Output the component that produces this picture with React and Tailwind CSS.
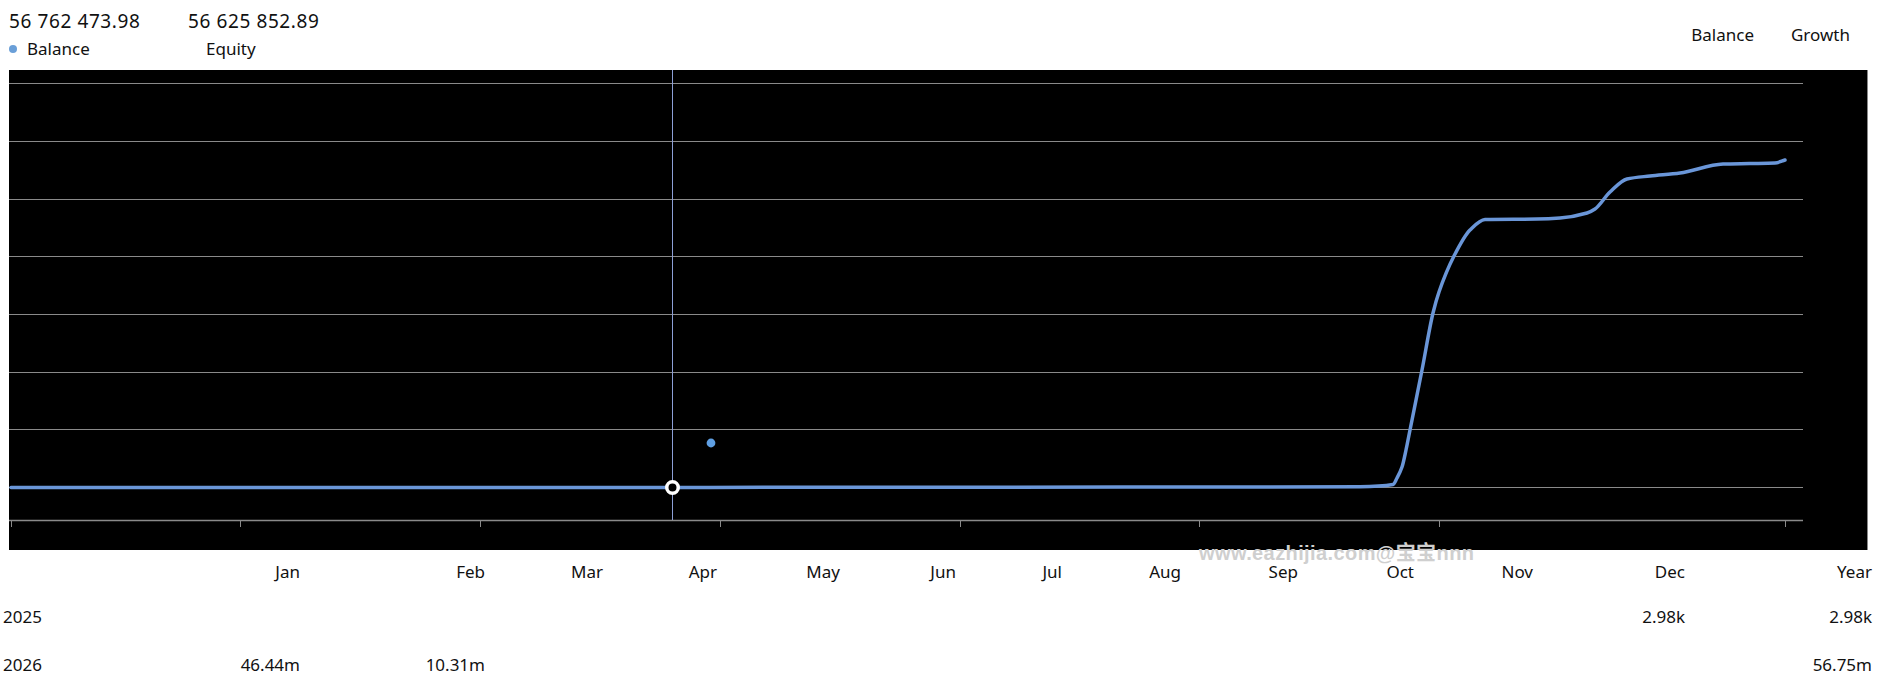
const gridLines = [13, 71, 129, 186, 244, 302, 359, 417];
const ticks = [2, 231, 471, 711, 951, 1190, 1430, 1776];

// points of the balance curve, in panel coordinates
const curve = [
  [2, 417.4], [700, 417.4], [1200, 417], [1351, 416.7], [1384, 414.5], [1388, 408], [1393, 397], [1397, 380],
  [1401, 360], [1413, 300], [1424, 243], [1430, 222],
  [1445, 186], [1461, 160], [1476, 149.5], [1528, 149],
  [1551, 148], [1578, 143], [1586, 139], [1601, 122], [1618, 109], [1641, 106],
  [1671, 103], [1714, 94], [1741, 93.5], [1766, 93], [1776, 90],
];

// monotone cubic, same idea as the chart libraries use: no overshoot on flat runs
function monotonePath(pts) {
  const n = pts.length;
  const dx = [];
  const slope = [];
  for (let i = 0; i < n - 1; i++) {
    dx[i] = pts[i + 1][0] - pts[i][0];
    slope[i] = (pts[i + 1][1] - pts[i][1]) / dx[i];
  }
  const t = [slope[0]];
  for (let i = 1; i < n - 1; i++) {
    if (slope[i - 1] * slope[i] <= 0) t[i] = 0;
    else {
      const w1 = 2 * dx[i] + dx[i - 1];
      const w2 = dx[i] + 2 * dx[i - 1];
      t[i] = (w1 + w2) / (w1 / slope[i - 1] + w2 / slope[i]);
    }
  }
  t[n - 1] = slope[n - 2];
  let d = `M${pts[0][0]} ${pts[0][1]}`;
  for (let i = 0; i < n - 1; i++) {
    const h = dx[i] / 3;
    d += ` C${pts[i][0] + h} ${pts[i][1] + t[i] * h} ${pts[i + 1][0] - h} ${pts[i + 1][1] - t[i + 1] * h} ${pts[i + 1][0]} ${pts[i + 1][1]}`;
  }
  return d;
}

const months = ["Jan", "Feb", "Mar", "Apr", "May", "Jun", "Jul", "Aug", "Sep", "Oct", "Nov", "Dec", "Year"];

const rows = [
  { year: "2025", gap: "mt-[21px]", values: { Dec: "2.98k", Year: "2.98k" } },
  { year: "2026", gap: "mt-[24px]", values: { Jan: "46.44m", Feb: "10.31m", Year: "56.75m" } },
];

const tableCols = "grid-cols-[97px_200px_185px_118px_114px_123px_116px_106px_119px_117px_116px_119px_152px_187px]";

function Stat({ value, label, dot }) {
  return (
    <div className="w-[179px]">
      <div className="text-[19px] leading-[26px] tracking-[0.6px]">{value}</div>
      <div className="mt-[4px] flex items-center text-[17px] leading-[22px]">
        <span className={`mr-[10px] h-[8px] w-[8px] rounded-full ${dot ? "bg-[#6a9fd8]" : ""}`} />
        {label}
      </div>
    </div>
  );
}

export default function App() {
  return (
    <div className="relative h-[681px] overflow-hidden bg-white font-['Noto_Sans',sans-serif] text-[#111]">
      <div className="flex h-[70px] items-start justify-between pl-[9px] pr-[34px] pt-[8px]">
        <div className="flex">
          <Stat value="56 762 473.98" label="Balance" dot />
          <Stat value="56 625 852.89" label="Equity" />
        </div>
        <div className="flex gap-[37px] pt-[15px] text-[17px] leading-[24px]">
          <span>Balance</span>
          <span>Growth</span>
        </div>
      </div>

      <div className="ml-[9px] h-[480px] w-[1859px] border-r border-[#888] bg-black">
        <svg width="1858" height="480" viewBox="0 0 1858 480" className="block">
          {gridLines.map((y) => (
            <line key={y} x1="0" x2="1794" y1={y + 0.5} y2={y + 0.5} stroke="#8a8a8a" strokeWidth="1" />
          ))}
          <line x1="0" x2="1794" y1="450.5" y2="450.5" stroke="#8a8a8a" strokeWidth="1.5" />
          {ticks.map((x) => (
            <line key={x} x1={x + 0.5} x2={x + 0.5} y1="450" y2="457" stroke="#8a8a8a" strokeWidth="1" />
          ))}
          <line x1="663.5" x2="663.5" y1="0" y2="450" stroke="#8c9fd6" strokeWidth="1" />
          <path d={monotonePath(curve)} fill="none" stroke="#6a96d8" strokeWidth="3.5" strokeLinecap="round" />
          <circle cx="663.5" cy="417.5" r="5.75" fill="#000" stroke="#fff" strokeWidth="3.5" />
          <circle cx="702" cy="373" r="4.4" fill="#5f9fe3" />
        </svg>
      </div>

      <div className={`mt-[10px] grid pl-[3px] text-[17px] ${tableCols}`}>
        <div className="h-[24px]" />
        {months.map((m) => (
          <div key={m} className="h-[24px] pt-[3px] text-right leading-[17px]">{m}</div>
        ))}
        {rows.map((row) => (
          <div key={row.year} className="contents">
            <div className={`${row.gap} h-[24px] leading-[24px]`}>{row.year}</div>
            {months.map((m) => (
              <div key={m} className={`${row.gap} h-[24px] text-right leading-[24px]`}>{row.values[m]}</div>
            ))}
          </div>
        ))}
      </div>

      <div className="absolute left-[1199px] top-[543px] text-[20px] font-bold leading-[20px] tracking-[0.4px] text-[#cfcfcf] font-['Liberation_Sans','Noto_Sans_CJK_SC',sans-serif]">
        www.eazhijia.com@宝宝nnn
      </div>
    </div>
  );
}
